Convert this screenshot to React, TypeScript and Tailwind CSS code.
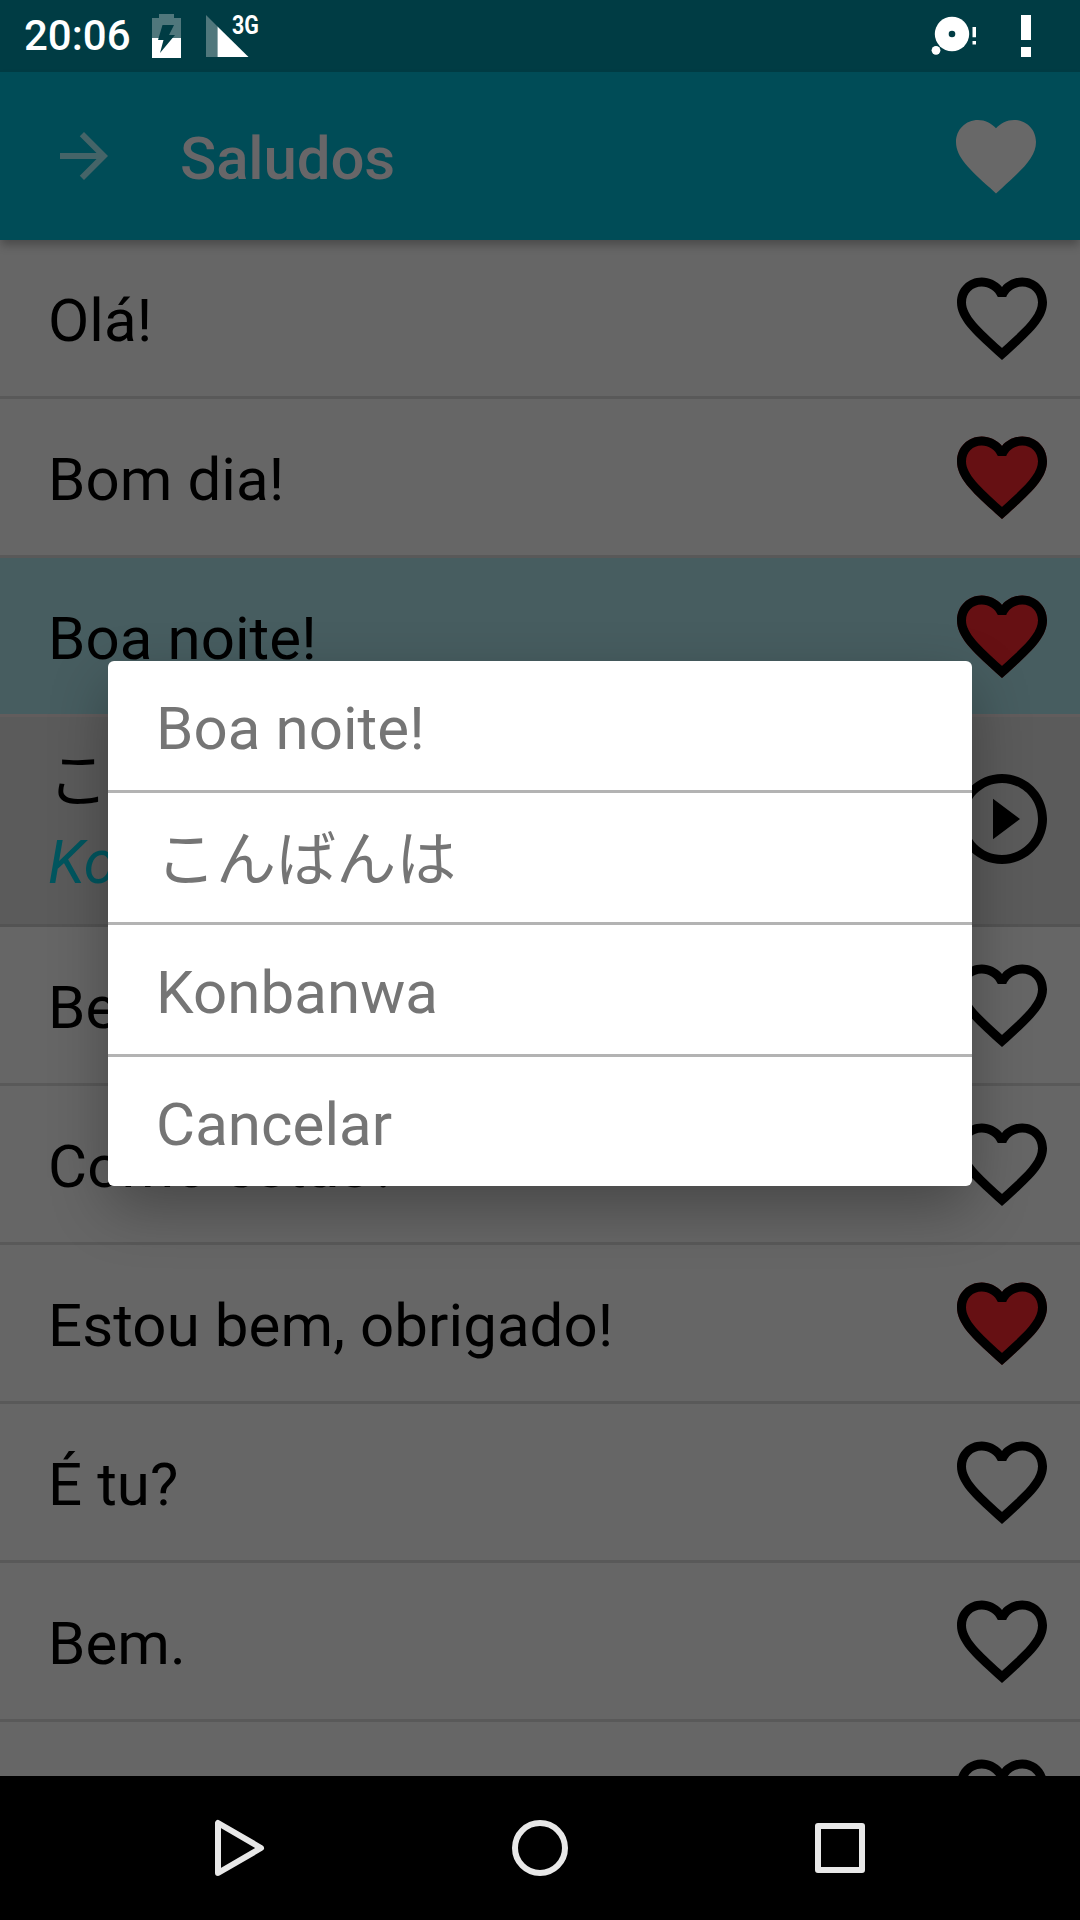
import React from 'react';

interface Phrase {
  text: string;
  favorite?: boolean;
  selected?: boolean;
}

const phrases: Phrase[] = [
  { text: 'Olá!' },
  { text: 'Bom dia!', favorite: true },
  { text: 'Boa noite!', favorite: true, selected: true },
  { text: 'Bem-vindo!' },
  { text: 'Como estás?' },
  { text: 'Estou bem, obrigado!', favorite: true },
  { text: 'É tu?' },
  { text: 'Bem.' },
  { text: '' },
];

const options = ['Boa noite!', 'こんばんは', 'Konbanwa', 'Cancelar'];

const HEART =
  'M12 21.35l-1.45-1.32C5.4 15.36 2 12.28 2 8.5 2 5.42 4.42 3 7.5 3c1.74 0 3.41.81 4.5 2.09C13.09 3.81 14.76 3 16.5 3 19.58 3 22 5.42 22 8.5c0 3.78-3.4 6.86-8.55 11.54L12 21.35z';
const HEART_BORDER =
  'M16.5 3c-1.74 0-3.41.81-4.5 2.09C10.91 3.81 9.24 3 7.5 3 4.42 3 2 5.42 2 8.5c0 3.78 3.4 6.86 8.55 11.54L12 21.35l1.45-1.32C18.6 15.36 22 12.28 22 8.5 22 5.42 19.58 3 16.5 3zm-4.4 15.55l-.1.1-.1-.1C7.14 14.24 4 11.39 4 8.5 4 6.5 5.5 5 7.5 5c1.54 0 3.04.99 3.57 2.36h1.87C13.46 5.99 14.96 5 16.5 5c2 0 3.5 1.5 3.5 3.5 0 2.89-3.14 5.74-7.9 10.05z';

const FavoriteIcon: React.FC<{ filled?: boolean }> = ({ filled }) => (
  <svg viewBox="0 0 24 24" className="w-[108px] h-[108px] shrink-0">
    {filled && <path d={HEART} fill="#661013" />}
    <path d={HEART_BORDER} fill="#000" />
  </svg>
);

const StatusBar = () => (
  <div className="h-[72px] shrink-0 bg-[#003c44] flex justify-between text-white">
    <div className="flex pl-6">
      <span className="w-[126px] text-[42px] leading-[72px] font-medium">20:06</span>
      {/* Battery, charging */}
      <svg viewBox="0 0 36 72" className="w-9 h-[72px]">
        <path d="M2 18h7v-4h15v4h7v20H2z" fill="#50777c" />
        <path d="M2 38h29v20H2z" fill="#fff" />
        <path d="M12.5 25h11.5l-5 10h6L10 53l3.5-13H8z" fill="#003c44" />
      </svg>
      {/* Mobile signal */}
      <div className="relative ml-5 w-14">
        <svg viewBox="0 0 56 72" className="w-14 h-[72px]">
          <path d="M0 15l11.5 11.5V57H0z" fill="#50777c" />
          <path d="M11.5 26.5L42.5 57h-31z" fill="#fff" />
        </svg>
        <span className="absolute left-[26px] top-[10px] text-[26px] leading-[30px] font-bold origin-left scale-x-[0.82]">3G</span>
      </div>
    </div>
    <div className="flex">
      <svg viewBox="0 0 50 72" className="w-[50px] h-[72px]">
        <circle cx="22" cy="34" r="17.2" fill="#fff" />
        <circle cx="22" cy="34" r="3.3" fill="#003c44" />
        <circle cx="6" cy="50.3" r="4.4" fill="#fff" />
        <path d="M42.5 27h3.5v10.3h-3.5zM42.5 41h3.5v3.4h-3.5z" fill="#fff" />
      </svg>
      <svg viewBox="0 0 100 72" className="w-[100px] h-[72px]">
        <path d="M41 15h10v25H41zM41 47h10v10H41z" fill="#fff" />
      </svg>
    </div>
  </div>
);

const AppBar = () => (
  <div className="relative z-10 h-[168px] shrink-0 bg-[#004c57] flex items-center pl-12 pr-9 shadow-[0_6px_9px_-1px_rgba(0,0,0,0.28)]">
    <svg viewBox="0 0 24 24" className="w-[72px] h-[72px]" fill="#456468">
      <path d="M12 4l-1.41 1.41L16.17 11H4v2h12.17l-5.58 5.59L12 20l8-8z" />
    </svg>
    <h1 className="ml-[60px] flex-1 pt-[5px] text-[60px] leading-[70px] tracking-[-0.15px] font-medium text-[#686668]">Saludos</h1>
    <svg viewBox="0 0 24 24" className="w-24 h-24" fill="#686868">
      <path d={HEART} />
    </svg>
  </div>
);

const Translation = () => (
  <div className="h-[210px] border-b-[3px] border-[#535353] bg-[#5b5b5b] flex justify-between items-start pl-12 pr-6">
    <div className="pt-6 text-[60px] leading-[81px]">
      <p>こんばんは</p>
      <p className="italic text-[#00565f]">Konbanwa</p>
    </div>
    <svg viewBox="0 0 24 24" className="mt-12 w-[108px] h-[108px] shrink-0">
      <path d="M10 16.5l6-4.5-6-4.5v9zM12 2C6.48 2 2 6.48 2 12s4.48 10 10 10 10-4.48 10-10S17.52 2 12 2zm0 18c-4.41 0-8-3.59-8-8s3.59-8 8-8 8 3.59 8 8-3.59 8-8 8z" />
    </svg>
  </div>
);

const NavigationBar = () => (
  <div className="h-36 shrink-0 bg-black px-[90px] grid grid-cols-3 justify-items-center items-center">
    <svg viewBox="0 0 60 60" className="w-[60px] h-[60px]" fill="none" stroke="#e8e8e8" strokeWidth="6" strokeLinejoin="round">
      <path d="M8 5v50l43-25z" />
    </svg>
    <svg viewBox="0 0 60 60" className="w-[60px] h-[60px]" fill="none" stroke="#e8e8e8" strokeWidth="6">
      <circle cx="30" cy="30" r="25" />
    </svg>
    <svg viewBox="0 0 60 60" className="w-[60px] h-[60px]" fill="none" stroke="#e8e8e8" strokeWidth="6" strokeLinejoin="round">
      <path d="M8 8h44v44H8z" />
    </svg>
  </div>
);

const App: React.FC = () => {
  return (
    <div className="relative w-[1080px] h-[1920px] overflow-hidden flex flex-col bg-[#666] text-black font-['Roboto','Noto_Sans_CJK_JP',sans-serif]">
      <StatusBar />
      <AppBar />

      <div className="flex-1 min-h-0 overflow-hidden">
        {phrases.map((phrase, idx) => (
          <React.Fragment key={idx}>
            <div
              className={`h-[159px] border-b-[3px] flex items-center justify-between pl-12 pr-6 ${
                phrase.selected ? 'bg-[#475d60] border-[#625d5d]' : 'border-[#595959]'
              }`}
            >
              <span className="pt-[5px] text-[60px] leading-[70px] tracking-[0.08px] whitespace-nowrap">{phrase.text}</span>
              <FavoriteIcon filled={phrase.favorite} />
            </div>
            {phrase.selected && <Translation />}
          </React.Fragment>
        ))}
      </div>

      <NavigationBar />

      {/* Copy dialog */}
      <div className="absolute left-[108px] top-[661px] z-20 w-[864px] rounded-md bg-white divide-y-[3px] divide-[#b3b3b3] shadow-[0_22px_60px_-2px_rgba(0,0,0,0.32)]">
        {options.map((option) => (
          <div key={option} className="box-content h-[129px] flex items-center pl-12">
            <span className="pt-[7px] text-[60px] leading-[70px] tracking-[0.08px] text-[#757575]">{option}</span>
          </div>
        ))}
      </div>
    </div>
  );
};

export default App;
